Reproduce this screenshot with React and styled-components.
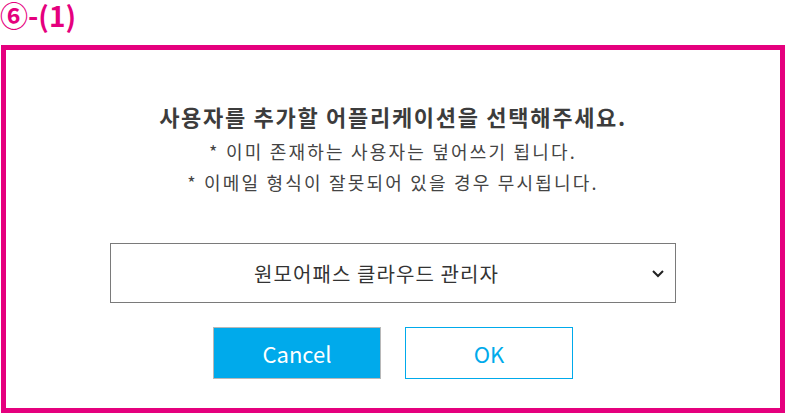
import React from "react";
import styled, { createGlobalStyle } from "styled-components";

const Global = createGlobalStyle`
  html, body { margin: 0; padding: 0; background: #ffffff; }
  body { font-family: "Noto Sans CJK KR", "Noto Sans", sans-serif; }
  * { box-sizing: border-box; }
`;

const Page = styled.div`
  width: 785px;
  height: 413px;
  display: flex;
  flex-direction: column;
  overflow: hidden;
`;

const Label = styled.div`
  height: 45px;
  color: #e5007e;
  font-size: 28px;
  font-weight: 700;
  line-height: 31px;
  white-space: nowrap;
`;

const Frame = styled.section`
  margin-left: 1px;
  width: 784px;
  height: 368px;
  border: 5px solid #e5007e;
  display: flex;
  flex-direction: column;
  align-items: center;
  padding-top: 51px;
`;

const Heading = styled.h2`
  margin: 0;
  font-size: 22px;
  font-weight: 700;
  line-height: 30px;
  letter-spacing: 1.7px;
  color: #3c3c3c;
`;

const Notes = styled.div`
  margin-top: 5px;
  display: flex;
  flex-direction: column;
  align-items: center;
`;

const Note = styled.p`
  margin: 0;
  font-size: 18px;
  line-height: 31px;
  letter-spacing: 2.2px;
  color: #444444;
`;

const Select = styled.div`
  margin-top: 45px;
  width: 566px;
  height: 60px;
  border: 1px solid #7a7a7a;
  display: flex;
  align-items: center;
  padding: 0 10px 0 10px;
  color: #333333;
  font-size: 20px;
  letter-spacing: 1.1px;
  cursor: pointer;
`;

const SelectText = styled.span`
  flex: 1;
  text-align: center;
`;

const Chevron = styled.svg`
  width: 14px;
  height: 14px;
  margin-left: 19px;
  flex: none;
`;

const Buttons = styled.div`
  margin-top: 24px;
  display: flex;
  gap: 24px;
`;

const Button = styled.button`
  width: 168px;
  height: 52px;
  font-family: inherit;
  font-size: 22px;
  font-weight: 400;
  border: 1px solid ${(p) => (p.$primary ? "#b8b8b8" : "#00aaeb")};
  background: ${(p) => (p.$primary ? "#00aaeb" : "#ffffff")};
  color: ${(p) => (p.$primary ? "#ffffff" : "#00aaeb")};
  padding: 0;
  cursor: pointer;
`;

export default function App() {
  return (
    <>
      <Global />
      <Page>
        <Label>⑥-(1)</Label>
        <Frame>
          <Heading>사용자를 추가할 어플리케이션을 선택해주세요.</Heading>
          <Notes>
            <Note>* 이미 존재하는 사용자는 덮어쓰기 됩니다.</Note>
            <Note>* 이메일 형식이 잘못되어 있을 경우 무시됩니다.</Note>
          </Notes>
          <Select role="combobox">
            <SelectText>원모어패스 클라우드 관리자</SelectText>
            <Chevron viewBox="0 0 14 14">
              <path d="M2 5 L7 10 L12 5" fill="none" stroke="#222" strokeWidth="2" />
            </Chevron>
          </Select>
          <Buttons>
            <Button $primary>Cancel</Button>
            <Button>OK</Button>
          </Buttons>
        </Frame>
      </Page>
    </>
  );
}
